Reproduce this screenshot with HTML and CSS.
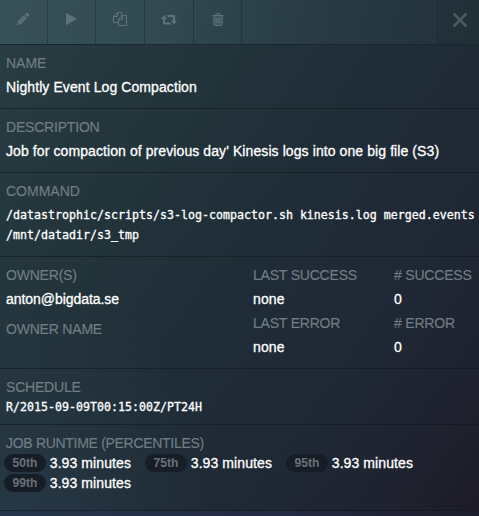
FILE: index.html
```html
<!DOCTYPE html>
<html lang="en">
<head>
<meta charset="utf-8">
<title>Job details</title>
<link rel="stylesheet" href="styles.css">
</head>
<body>
<main class="panel">
  <header class="toolbar">
    <button class="tool edit" aria-label="Edit"><svg width="14" height="14" viewBox="0 0 14 14"><path d="M1 13l.8-3.800L8.200 2.800l3 3-6.400 6.400zM9 2l1-1q.9-.8 1.800 0l1.200 1.200q.8.9 0 1.800l-1 1z"/><path class="cut" d="M2.200 10l1.700 1.700M4.200 9.600l4.700-4.700"/></svg></button>
    <button class="tool play" aria-label="Run"><svg width="12" height="14" viewBox="0 0 12 14"><path d="M1 .8L11.800 7 1 13.200z"/></svg></button>
    <button class="tool copy" aria-label="Duplicate"><svg width="14" height="14" viewBox="0 0 14 14"><path class="line" d="M5.500 10.500h-5v-6l4-4h4v4M4.500.5v4h-4M9.500 3.500h4v10h-8v-6zM9.500 3.500v4h-4"/></svg></button>
    <button class="tool repeat" aria-label="Repeat"><svg width="16" height="12" viewBox="0 0 16 12"><path d="M3 1L6 4.800H4V8.500h5l1.500 2H2V4.800H0zM5.500 1H14v5.500h2L13 10.500 9.800 6.500H12V3H7z"/></svg></button>
    <button class="tool trash" aria-label="Delete"><svg width="12" height="13" viewBox="0 0 12 13"><path class="fill" d="M2 3h8v9H2z"/><path class="line" d="M.5 2.500h11M3.500 2.500l1-2h3l1 2M1.800 3v8q0 1.500 1 1.500h6.400q1 0 1-1.500V3M4 5v5M6 5v5M8 5v5"/></svg></button>
    <button class="tool close" aria-label="Close"><svg width="16" height="16" viewBox="0 0 16 16"><path d="M1.500 1.500l13 13M14.500 1.500l-13 13"/></svg></button>
  </header>
  <section class="section">
    <h2 class="label title">NAME</h2>
    <p class="value">Nightly Event Log Compaction</p>
  </section>
  <section class="section">
    <h2 class="label">DESCRIPTION</h2>
    <p class="value">Job for compaction of previous day' Kinesis logs into one big file (S3)</p>
  </section>
  <section class="section">
    <h2 class="label title">COMMAND</h2>
    <p class="value mono">/datastrophic/scripts/s3-log-compactor.sh kinesis.log merged.events<br>/mnt/datadir/s3_tmp</p>
  </section>
  <section class="section stats">
    <div>
      <h2 class="label">OWNER(S)</h2>
      <p class="value owner">anton@bigdata.se</p>
      <h2 class="label">OWNER NAME</h2>
    </div>
    <div>
      <h2 class="label">LAST SUCCESS</h2>
      <p class="value">none</p>
      <h2 class="label">LAST ERROR</h2>
      <p class="value">none</p>
    </div>
    <div>
      <h2 class="label"># SUCCESS</h2>
      <p class="value">0</p>
      <h2 class="label"># ERROR</h2>
      <p class="value">0</p>
    </div>
  </section>
  <section class="section schedule">
    <h2 class="label">SCHEDULE</h2>
    <p class="value mono">R/2015-09-09T00:15:00Z/PT24H</p>
  </section>
  <section class="section runtime">
    <h2 class="label">JOB RUNTIME (PERCENTILES)</h2>
    <ul class="percentiles">
      <li><span class="badge">50th</span><span class="value">3.93 minutes</span></li>
      <li><span class="badge">75th</span><span class="value">3.93 minutes</span></li>
      <li><span class="badge">95th</span><span class="value">3.93 minutes</span></li>
      <li><span class="badge">99th</span><span class="value">3.93 minutes</span></li>
    </ul>
  </section>
</main>
</body>
</html>
```
FILE: styles.css
```css
* { box-sizing: border-box; }
body {
  margin: 0;
  background: #202936;
  font: 14px/20px "Liberation Sans", Arial, sans-serif;
  color: #fff;
}
.panel {
  height: 516px;
  overflow: hidden;
  background:
    linear-gradient(90deg, #26364a, #232a42 60%, #1e1d2b) 0 100% / 100% 5px no-repeat,
    radial-gradient(ellipse 220px 260px at 0 100%, rgba(40, 58, 72, .8), rgba(40, 58, 72, 0)),
    linear-gradient(125deg, #293e43 0%, #23343b 28%, #1f2d37 50%, #1f2735 75%, #1f212e 90%, #1c1b25 100%);
}
.toolbar {
  display: flex;
  height: 45px;
  border-bottom: 1px solid #1a272e;
  background: linear-gradient(100deg, #385057 0%, #314951 35%, #283b46 65%, #23313a 100%);
}
.tool {
  display: flex;
  justify-content: center;
  width: 48px;
  height: 44px;
  padding: 12px 0 0;
  border: 0;
  border-right: 1px solid rgba(15, 27, 34, .35);
  background: none;
  color: #5f7278;
}
.edit { padding-right: 1px; }
.copy, .repeat { width: 49px; }
.play { padding-right: 1px; }
.repeat { padding-top: 14px; }
.trash { padding-top: 13px; }
.close {
  width: 42px;
  margin-left: auto;
  border-right: 0;
  border-left: 1px solid #1c2931;
  padding: 12px 0 0 3px;
  background: rgba(15, 20, 28, .08);
  color: #4b575f;
}
svg { fill: currentColor; }
.line { fill: none; stroke: currentColor; stroke-width: 1; }
.fill { opacity: .4; }
.cut { fill: none; stroke: #344b53; stroke-width: .5; }
.close path { fill: none; stroke: currentColor; stroke-width: 2.7; }
.section {
  padding: 8px 6px 11px;
  border-bottom: 1px solid rgba(13, 21, 28, .55);
}
.label {
  margin: 0 0 4px;
  font-size: 14px;
  font-weight: 400;
  line-height: 20px;
  letter-spacing: -.2px;
  color: #727d83;
  white-space: nowrap;
  -webkit-text-stroke: .15px currentColor;
}
.title { letter-spacing: 0; }
.runtime .label { letter-spacing: -.3px; }
.value {
  margin: 0;
  letter-spacing: .09px;
  white-space: nowrap;
  -webkit-text-stroke: .3px currentColor;
}
.mono {
  font-family: "DejaVu Sans Mono", monospace;
  font-size: 11.600px;
  letter-spacing: .017px;
}
.stats {
  display: grid;
  grid-template-columns: 247px 141px 1fr;
}
.stats .value { margin-bottom: 4px; }
.stats .owner { margin-bottom: 10px; letter-spacing: -.05px; }
.stats div > :last-child { margin-bottom: 0; }
.schedule { padding-bottom: 7px; }
.schedule .label, .runtime .label { margin-bottom: 0; }
.runtime { padding-bottom: 17px; }
.percentiles {
  display: flex;
  flex-wrap: wrap;
  column-gap: 14px;
  width: 450px;
  margin: 0 0 0 -2px;
  padding: 0;
  list-style: none;
}
.percentiles li {
  display: flex;
  align-items: center;
  width: 127px;
  height: 20px;
  gap: 4px;
}
.badge {
  width: 42px;
  height: 18px;
  border-radius: 9px;
  background: #161d27;
  color: #6b7278;
  font-size: 12px;
  font-weight: 700;
  line-height: 18px;
  text-align: center;
}
```
